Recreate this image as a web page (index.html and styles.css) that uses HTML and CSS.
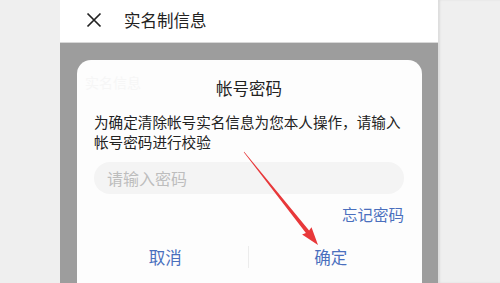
FILE: index.html
```html
<!DOCTYPE html>
<html lang="zh-CN">
<head>
<meta charset="utf-8">
<link rel="stylesheet" href="styles.css">
</head>
<body>
<div class="screen">
  <div class="side"></div>
  <div class="phone">
    <div class="header">
      <svg class="close" width="16" height="16" viewBox="0 0 16 16"><path d="M1.5 1.5 L14.5 14.5 M14.5 1.5 L1.5 14.5" stroke="#222" stroke-width="1.7" fill="none"/></svg>
      <span class="title">实名制信息</span>
    </div>
    <div class="overlay">
      <div class="dialog">
        <div class="ghost">实名信息</div>
        <div class="d-title">帐号密码</div>
        <div class="d-body">为确定清除帐号实名信息为您本人操作，请输入帐号密码进行校验</div>
        <div class="input">请输入密码</div>
        <div class="forgot">忘记密码</div>
        <div class="buttons">
          <div class="btn cancel">取消</div>
          <div class="divider"></div>
          <div class="btn ok">确定</div>
        </div>
      </div>
    </div>
  </div>
  <div class="side right"></div>
</div>
<svg class="arrow" width="500" height="283" viewBox="0 0 500 283">
  <polygon points="243.8,152.2 244.2,151.8 309.1,230.6 311.5,227.2 318,245 302.1,234.6 305.9,233" fill="#e8383a"/>
</svg>
</body>
</html>
```
FILE: styles.css
```css
html, body {
  margin: 0;
  padding: 0;
  width: 500px;
  height: 283px;
  overflow: hidden;
  font-family: "Noto Sans CJK SC", "Noto Sans", sans-serif;
  position: relative;
}
.screen {
  display: flex;
  height: 283px;
}
.side {
  width: 60px;
  background: #efefef;
}
.side.right {
  width: 62px;
  box-shadow: inset 2px 0 2px rgba(0,0,0,0.08);
}
.phone {
  width: 378px;
  display: flex;
  flex-direction: column;
  overflow: hidden;
}
.header {
  height: 42px;
  background: #fff;
  border-bottom: 1px solid #d8d8d8;
  display: flex;
  align-items: center;
  flex-shrink: 0;
}
.close {
  margin-left: 26px;
  margin-top: -3px;
}
.title {
  margin-left: 22px;
  font-size: 16.5px;
  color: #222;
  margin-top: -3px;
}
.overlay {
  flex: 1;
  background: #9d9d9d;
  padding: 17px 16px 0 17px;
}
.dialog {
  background: #fdfdfd;
  border-radius: 14px;
  height: 260px;
  padding: 0 18px 0 17px;
  position: relative;
  display: flex;
  flex-direction: column;
}
.ghost {
  position: absolute;
  left: 8px;
  top: 12px;
  font-size: 14px;
  color: #f6f6f6;
}
.d-title {
  margin-top: 17px;
  line-height: 22px;
  font-size: 16.5px;
  text-align: center;
  color: #222;
}
.d-body {
  margin-top: 13px;
  font-size: 14.6px;
  line-height: 20px;
  color: #222;
}
.input {
  margin-top: 10px;
  height: 32px;
  border-radius: 16px;
  background: #f4f4f4;
  display: flex;
  align-items: center;
  padding-left: 13px;
  font-size: 16px;
  color: #bdbdbd;
}
.forgot {
  margin-top: 10px;
  line-height: 20px;
  font-size: 15.5px;
  text-align: right;
  color: #4a6fbd;
}
.buttons {
  margin-top: 13px;
  height: 40px;
  display: flex;
  align-items: center;
  margin-left: -17px;
  margin-right: -18px;
}
.btn {
  flex: 1;
  text-align: center;
  font-size: 16.5px;
  color: #4a6fbd;
}
.btn.cancel {
  padding-left: 6px;
}
.btn.ok {
  padding-right: 9px;
}
.divider {
  width: 1px;
  height: 22px;
  background: #ececec;
}
.arrow {
  position: absolute;
  left: 0;
  top: 0;
}
```
